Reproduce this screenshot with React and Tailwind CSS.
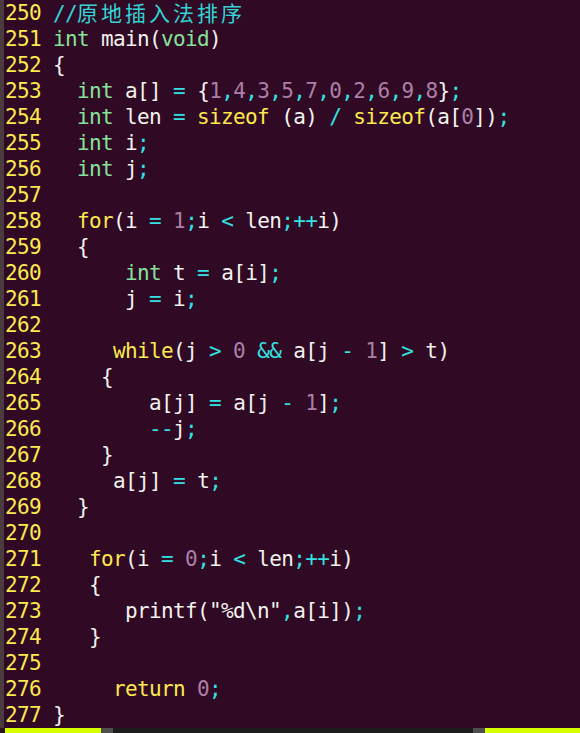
const lines = [
  [250, '//原地插入法排序'],
  [251, 'int main(void)'],
  [252, '{'],
  [253, '  int a[] = {1,4,3,5,7,0,2,6,9,8};'],
  [254, '  int len = sizeof (a) / sizeof(a[0]);'],
  [255, '  int i;'],
  [256, '  int j;'],
  [257, ''],
  [258, '  for(i = 1;i < len;++i)'],
  [259, '  {'],
  [260, '      int t = a[i];'],
  [261, '      j = i;'],
  [262, ''],
  [263, '     while(j > 0 && a[j - 1] > t)'],
  [264, '    {'],
  [265, '        a[j] = a[j - 1];'],
  [266, '        --j;'],
  [267, '    }'],
  [268, '     a[j] = t;'],
  [269, '  }'],
  [270, ''],
  [271, '   for(i = 0;i < len;++i)'],
  [272, '   {'],
  [273, '      printf("%d\\n",a[i]);'],
  [274, '   }'],
  [275, ''],
  [276, '     return 0;'],
  [277, '}'],
];

const TYPES = ['int', 'void'];
const STATEMENTS = ['for', 'while', 'return', 'sizeof'];

// split a line into coloured pieces
const tokenize = (src) => {
  const re = /(\/\/.*)|("(?:[^"\\]|\\.)*")|([A-Za-z_]\w*)|(\d+)|([=<>&;,+\-/])|(\s+)|(.)/g;
  const out = [];
  let m;
  while ((m = re.exec(src))) {
    if (m[1]) out.push({ t: m[1], k: 'comment' });
    else if (m[2]) out.push({ t: m[2], k: 'plain' });
    else if (m[3]) {
      const k = TYPES.includes(m[3]) ? 'type' : STATEMENTS.includes(m[3]) ? 'stmt' : 'plain';
      out.push({ t: m[3], k });
    } else if (m[4]) out.push({ t: m[4], k: 'num' });
    else if (m[5]) out.push({ t: m[5], k: 'op' });
    else out.push({ t: m[0], k: 'plain' });
  }
  return out;
};

const colors = {
  comment: 'text-[#34d4d6]',
  plain: 'text-[#f2f2ee]',
  type: 'text-[#86e29b]',
  stmt: 'text-[#fce94f]',
  num: 'text-[#ad7fa8]',
  op: 'text-[#34e2e2]',
};

const Comment = ({ text }) => {
  const slash = text.slice(0, 2);
  const rest = text.slice(2);
  return (
    <span className={colors.comment}>
      {slash}
      <span className="tracking-[3px] font-['Noto_Sans_CJK_SC',sans-serif]">{rest}</span>
    </span>
  );
};

const CodeLine = ({ num, src }) => (
  <div className="flex h-[26px] items-center whitespace-pre">
    <span className="w-[48px] shrink-0 text-[#fce94f]">{num}</span>
    <span>
      {tokenize(src).map((tok, i) =>
        tok.k === 'comment' ? (
          <Comment key={i} text={tok.t} />
        ) : (
          <span key={i} className={colors[tok.k]}>
            {tok.t}
          </span>
        )
      )}
    </span>
  </div>
);

export default function App() {
  return (
    <div className="h-[733px] w-[580px] overflow-hidden bg-[#300a24] font-['DejaVu_Sans_Mono','Noto_Sans_CJK_SC',monospace] text-[21px] leading-[26px] tracking-[-0.64px]">
      <div className="flex">
        <div className="w-[4px] shrink-0 bg-[#4b3a3e]" />
        <div className="flex-1 pl-[1px]">
          {lines.map(([num, src]) => (
            <CodeLine key={num} num={num} src={src} />
          ))}
        </div>
      </div>

      {/* status line, mostly cut off by the window */}
      <div className="flex h-[26px] text-[16px] leading-[26px]">
        <div className="w-[5px] shrink-0 bg-[#2a1420]" />
        <div className="w-[96px] shrink-0 bg-[#d7ff00]" />
        <div className="w-[12px] shrink-0 bg-[#4e4e4e]" />
        <div className="flex-1 bg-[#1c1c1c] pl-[48px] pt-[3px] text-[#34e2e2]">i</div>
        <div className="w-[12px] shrink-0 bg-[#4e4e4e]" />
        <div className="w-[95px] shrink-0 bg-[#d7ff00] pl-[28px] pt-[3px] font-bold text-[#303030]">30%</div>
      </div>
    </div>
  );
}
